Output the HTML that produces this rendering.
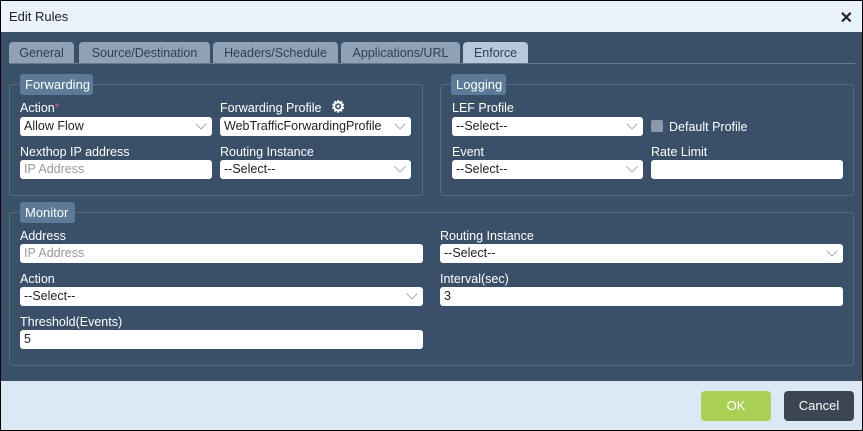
<!DOCTYPE html>
<html><head><style>
*{box-sizing:border-box;margin:0;padding:0}
body{width:863px;height:431px;overflow:hidden;background:#000;font-family:"Liberation Sans",sans-serif;font-size:12px;position:relative}
.a{position:absolute}
#hd{left:1px;top:1px;width:861px;height:31px;background:#eaf3fb;color:#222;font-size:13px;padding:8px 0 0 8px}
#bd{left:1px;top:32px;width:861px;height:349px;background:#3a5068}
#ft{left:1px;top:381px;width:861px;height:49px;background:#dce9f5}
.tab{top:42px;height:22px;background:#8fa2b5;color:#2e3f50;border-radius:4px 4px 0 0;text-align:center;line-height:22px;font-size:12.5px}
.fs{border:1px solid #55697f;border-radius:3px}
.lg{background:#5b7b98;color:#fff;border-radius:3px;height:21px;line-height:21px;padding-left:5px;font-size:13px}
.lb{color:#fff;font-size:12.5px}
.in{background:#fff;border-radius:3px;height:19px;line-height:19px;padding-left:4px;color:#222;font-size:12.5px}
.ph{color:#999}
.sel::after{content:"";position:absolute;right:7px;top:3px;width:7px;height:7px;border-right:1px solid #aaa;border-bottom:1px solid #aaa;transform:rotate(45deg)}
.btn{top:391px;width:70px;height:30px;border-radius:4px;color:#fff;text-align:center;line-height:30px;font-size:13px}
</style></head><body>
<div class="a" id="hd">Edit Rules</div>
<div class="a" style="right:10px;top:8px;font-size:16px;font-weight:bold;color:#222">✕</div>
<div class="a" id="bd"></div>
<div class="a" id="ft"></div>
<div class="a tab" style="left:9px;width:65px">General</div>
<div class="a tab" style="left:79px;width:131px">Source/Destination</div>
<div class="a tab" style="left:213px;width:125px">Headers/Schedule</div>
<div class="a tab" style="left:341px;width:119px">Applications/URL</div>
<div class="a tab" style="left:463px;width:65px;background:#b6c8da">Enforce</div>
<div class="a" style="left:9px;top:63px;width:846px;height:1px;background:#66798d"></div>

<div class="a fs" style="left:9px;top:84px;width:414px;height:112px"></div>
<div class="a lg" style="left:20px;top:74px;width:73px">Forwarding</div>
<div class="a lb" style="left:20px;top:101px">Action<span style="color:#e05a6a">*</span></div>
<div class="a in sel" style="left:20px;top:117px;width:192px">Allow Flow</div>
<div class="a lb" style="left:220px;top:101px">Forwarding Profile</div>
<div class="a" style="left:331px;top:97px;color:#fff;font-size:16px;font-weight:bold">⚙</div>
<div class="a in sel" style="left:220px;top:117px;width:191px">WebTrafficForwardingProfile</div>
<div class="a lb" style="left:20px;top:145px">Nexthop IP address</div>
<div class="a in ph" style="left:20px;top:160px;width:192px">IP Address</div>
<div class="a lb" style="left:220px;top:145px">Routing Instance</div>
<div class="a in sel" style="left:220px;top:160px;width:191px">--Select--</div>

<div class="a fs" style="left:440px;top:84px;width:414px;height:112px"></div>
<div class="a lg" style="left:451px;top:74px;width:55px">Logging</div>
<div class="a lb" style="left:452px;top:101px">LEF Profile</div>
<div class="a in sel" style="left:452px;top:117px;width:191px">--Select--</div>
<div class="a" style="left:651px;top:120px;width:12px;height:12px;background:#8a98a8;border-radius:2px"></div>
<div class="a lb" style="left:669px;top:120px">Default Profile</div>
<div class="a lb" style="left:452px;top:145px">Event</div>
<div class="a in sel" style="left:452px;top:160px;width:191px">--Select--</div>
<div class="a lb" style="left:651px;top:145px">Rate Limit</div>
<div class="a in" style="left:651px;top:160px;width:192px"></div>

<div class="a fs" style="left:9px;top:212px;width:845px;height:154px"></div>
<div class="a lg" style="left:20px;top:202px;width:55px">Monitor</div>
<div class="a lb" style="left:20px;top:229px">Address</div>
<div class="a in ph" style="left:20px;top:244px;width:403px">IP Address</div>
<div class="a lb" style="left:20px;top:272px">Action</div>
<div class="a in sel" style="left:20px;top:287px;width:403px">--Select--</div>
<div class="a lb" style="left:20px;top:315px">Threshold(Events)</div>
<div class="a in" style="left:20px;top:330px;width:403px">5</div>
<div class="a lb" style="left:440px;top:229px">Routing Instance</div>
<div class="a in sel" style="left:440px;top:244px;width:403px">--Select--</div>
<div class="a lb" style="left:440px;top:272px">Interval(sec)</div>
<div class="a in" style="left:440px;top:287px;width:403px">3</div>

<div class="a btn" style="left:701px;background:#a9cf55">OK</div>
<div class="a btn" style="left:784px;background:#3c4553">Cancel</div>
</body></html>
